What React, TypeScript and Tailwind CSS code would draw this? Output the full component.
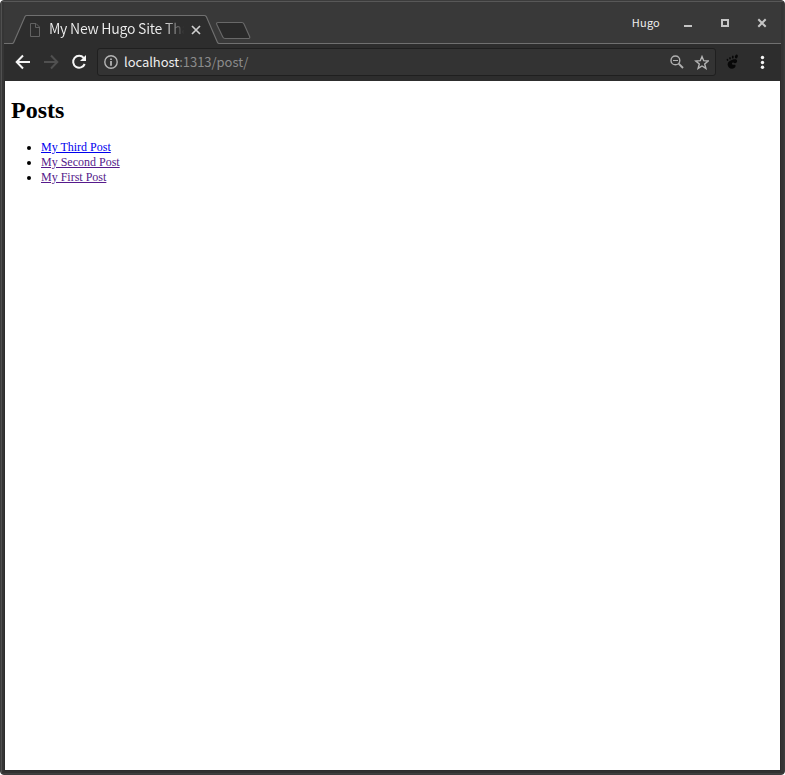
import React from "react";

const posts = [
  { title: "My Third Post", color: "text-[#0000ee]" },
  { title: "My Second Post", color: "text-[#551a8b]" },
  { title: "My First Post", color: "text-[#551a8b]" },
];

function TabOutline() {
  return (
    <svg className="absolute inset-0" width="777" height="42" viewBox="4 2 777 42" fill="none">
      <path d="M4 43.5H12C13 43.5 13.5 43 13.8 42.3L25 16.5C25.4 15.8 25.9 15.5 26.7 15.5H204.3C205.3 15.5 205.8 15.8 206.3 16.6L217.4 42.3C217.8 43.2 218.4 43.5 219.4 43.5H781V44H4Z" fill="#2d2d2d" />
      <path d="M4 43.5H12C13 43.5 13.5 43 13.8 42.3L25 16.5C25.4 15.8 25.9 15.5 26.7 15.5H204.3C205.3 15.5 205.8 15.8 206.3 16.6L217.4 42.3C217.8 43.2 218.4 43.5 219.4 43.5H781" stroke="#707070" strokeWidth="1.15" />
      <path d="M218 22.5H242C243 22.5 243.5 23 244 24L249.6 36.5C250.1 37.8 249.7 38.5 248.5 38.5H225C224 38.5 223.3 38 222.8 37L216.8 24.5C216.2 23.2 216.6 22.5 218 22.5Z" fill="#2a2a2a" stroke="#686868" strokeWidth="1.15" />
    </svg>
  );
}

function TabStrip() {
  return (
    <div className="relative h-[42px] shrink-0 bg-[#393939]">
      <TabOutline />
      <div className="relative flex h-[42px] items-start">
        <svg className="ml-[25px] mt-[20px] shrink-0" width="12" height="16" viewBox="0 0 12 16" fill="none" stroke="#626262">
          <path d="M1.5 1.5H7L10.5 5V14.5H1.5Z" />
          <path d="M6.5 1.5V5.5H10.5" />
        </svg>
        <div className="ml-[8px] mt-[15px] w-[138px] whitespace-nowrap bg-gradient-to-r from-[#eeeeee] from-[83%] to-transparent to-[98%] bg-clip-text text-[14px] leading-[22px] tracking-[-0.25px] text-transparent">
          My New Hugo Site Tha
        </div>
        <svg className="ml-[4px] mt-[23px] shrink-0" width="10" height="10" viewBox="0 0 10 10" stroke="#cfcfcf" strokeWidth="1.7">
          <path d="M1 1L9 9M9 1L1 9" />
        </svg>
        <div className="ml-auto mt-[12px] text-[11px] leading-4 tracking-[0.2px] text-[#eeeeee]">Hugo</div>
        <div className="ml-[24px] mt-[23px] h-[2px] w-[8px] bg-[#c5c5c5]" />
        <div className="ml-[29px] mt-[17px] h-[8px] w-[8px] border-2 border-[#c5c5c5]" />
        <svg className="ml-[28px] mr-[14px] mt-[16px]" width="10" height="10" viewBox="0 0 10 10" stroke="#c5c5c5" strokeWidth="2">
          <path d="M1.3 1.3L8.7 8.7M8.7 1.3L1.3 8.7" />
        </svg>
      </div>
    </div>
  );
}

function Toolbar() {
  return (
    <div className="flex h-[37px] shrink-0 items-start bg-[#2d2d2d]">
      <svg className="ml-[11px] mt-[10px]" width="16" height="16" viewBox="0 0 16 16" fill="none" stroke="#f5f5f5" strokeWidth="2">
        <path d="M15 8H2.5M8 1.5L1.7 8L8 14.5" />
      </svg>
      <svg className="ml-[12px] mt-[10px]" width="16" height="16" viewBox="0 0 16 16" fill="none" stroke="#505050" strokeWidth="2">
        <path d="M1 8H13.5M8 1.5L14.3 8L8 14.5" />
      </svg>
      <svg className="ml-[12px] mt-[10px]" width="16" height="16" viewBox="0 0 16 16" fill="none">
        <path d="M12.7 3.8A6 6 0 1 0 13.7 10" stroke="#f5f5f5" strokeWidth="2" />
        <path d="M15 1V7H9Z" fill="#f5f5f5" />
      </svg>
      <div className="ml-[10px] mt-[4px] flex h-[28px] w-[619px] items-center rounded-[3px] border border-[#1f1f1f] bg-[#333333]">
        <svg className="ml-[6px] shrink-0" width="14" height="14" viewBox="0 0 14 14" fill="none">
          <circle cx="7" cy="7" r="6.2" stroke="#b5b5b5" strokeWidth="1.4" />
          <path d="M7 6V10.7M7 3.4V5" stroke="#b5b5b5" strokeWidth="1.8" />
        </svg>
        <div className="ml-[6px] text-[13px] leading-5 tracking-[-0.05px] text-[#8b8b8b]">
          <span className="text-[#eeeeee]">localhost</span>:1313/post/
        </div>
        <svg className="ml-auto" width="14" height="14" viewBox="0 0 14 14" fill="none" stroke="#b0b0b0">
          <circle cx="5.4" cy="5.4" r="4.4" strokeWidth="1.4" />
          <path d="M8.7 8.7L13 13" strokeWidth="1.9" />
          <path d="M3 5.5H8" />
        </svg>
        <svg className="ml-[10px] mr-[6px]" width="15" height="15" viewBox="0 0 15 15" fill="none" stroke="#b5b5b5" strokeWidth="1.4">
          <path d="M8 1.6L9.7 5.7L14.2 6L10.7 9L11.9 13.4L8 11L4.1 13.4L5.3 9L1.8 6L6.3 5.7Z" />
        </svg>
      </div>
      <svg className="ml-[10px] mt-[10px]" width="13" height="16" viewBox="0 0 13 16" fill="#080808">
        <path d="M6.5 5.8C9 4.9 11.2 5.3 11.1 7.2C10.9 9 9 9.7 7.7 8.8C6.5 8 5.4 9.4 6.3 10.4C7.3 11.3 8.6 10.3 9.3 11C10.2 12.2 8.8 14.6 6.2 14.7C3.6 14.8 1.7 12.7 1.6 10.4C1.5 8 4 6.5 6.5 5.8Z" />
        <ellipse cx="10.4" cy="2.5" rx="1.4" ry="2" transform="rotate(15 10.4 2.5)" />
        <ellipse cx="6.8" cy="2.9" rx=".9" ry="1.5" />
        <ellipse cx="4" cy="4.3" rx=".8" ry="1.2" transform="rotate(-15 4 4.3)" />
        <ellipse cx="1.5" cy="5.8" rx=".8" ry="1.1" transform="rotate(-25 1.5 5.8)" />
      </svg>
      <svg className="ml-[21px] mt-[11px]" width="5" height="14" viewBox="0 0 5 14" fill="#f5f5f5">
        <circle cx="2.5" cy="2.5" r="1.7" />
        <circle cx="2.5" cy="7.5" r="1.7" />
        <circle cx="2.5" cy="12.3" r="1.7" />
      </svg>
    </div>
  );
}

export default function App() {
  return (
    <div className="h-[775px] w-[785px] overflow-hidden bg-white">
      <div className="flex h-full flex-col rounded-[4px] border border-[#3c3c3c] bg-[#2d2d2d] font-['Noto_Sans_CJK_SC',sans-serif]">
        <div className="flex min-h-0 flex-1 flex-col rounded-[3px] border-x border-b border-t border-b-[#3f3f3f] border-l-[#505050] border-r-[#383838] border-t-[#585858]">
          <div className="flex min-h-0 flex-1 flex-col border-x-2 border-b-2 border-b-[#313131] border-x-[#353535]">
            <TabStrip />
            <Toolbar />
            <main className="mx-px mb-px min-h-0 flex-1 bg-white font-['Liberation_Serif',serif] text-black">
              <h1 className="ml-[6px] mt-[16px] text-[24px] font-bold leading-[27px]">Posts</h1>
              <ul className="ml-[36px] mt-[16px] list-disc text-[12px] leading-[15px]">
                {posts.map((post) => (
                  <li key={post.title}>
                    <a className={`underline ${post.color}`} href="#">{post.title}</a>
                  </li>
                ))}
              </ul>
            </main>
          </div>
        </div>
      </div>
    </div>
  );
}
